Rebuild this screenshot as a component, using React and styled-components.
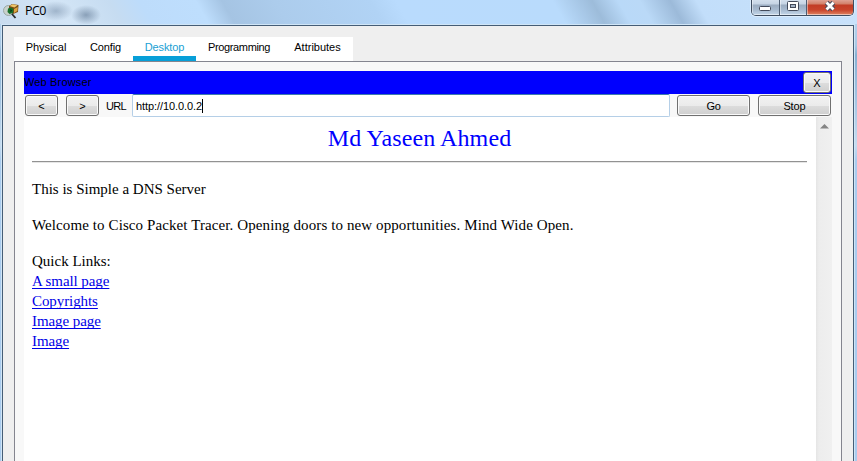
import React from "react";
import styled, { createGlobalStyle } from "styled-components";

const Global = createGlobalStyle`
  * { box-sizing: border-box; }
  body { margin: 0; overflow: hidden; }
`;

const Window = styled.div`
  width: 857px;
  height: 461px;
  display: flex;
  flex-direction: column;
  overflow: hidden;
  font: 11px/14px "Liberation Sans", Arial, sans-serif;
  color: #000;
  background: linear-gradient(180deg, #bcdaf5 0, #a9c8e4 45px, #86b0d2 55px, #a4c4e2 100px, #c6dcf0 145px, #a9cbee 160px, #a9cbee 100%);
`;

const TitleBar = styled.header`
  height: 24px;
  flex: none;
  display: flex;
  align-items: flex-start;
  padding: 0 3px 0 3px;
  background:
    radial-gradient(ellipse 17px 10px at 56px 11px, rgba(90, 115, 145, 0.42), transparent),
    radial-gradient(ellipse 15px 10px at 86px 15px, rgba(70, 95, 125, 0.5), transparent),
    linear-gradient(60deg, #c9dcef 0, #d3e5f6 8%, #c6dcf1 14%, #bddcfb 17.5%, #bedefd 24%, #a5c4e3 27%, #acccec 33%, #b1d3f5 44%, #b9dbfd 47%, #b9dbfc 65%, #9dbcda 69.5%, #b9d9f8 72.5%, #bad9f7 75%, #9cbad9 78.5%, #c2defa 81.5%, #c9e2fb 100%);
`;

const TitleIcon = styled.svg`
  width: 17px;
  height: 19px;
  margin-top: 2px;
`;

const Title = styled.span`
  margin: 3px 0 0 5px;
  font: 12.5px/16px "Open Sans", "Noto Sans", sans-serif;
  letter-spacing: -0.6px;
  flex: 1;
`;

const Captions = styled.div`
  display: flex;
  height: 16px;
  width: 103px;
  border: 1px solid #3f4d60;
  border-top: 0;
  border-radius: 0 0 5px 5px;
  overflow: hidden;
  box-shadow: 0 0 0 1px rgba(235, 245, 255, 0.6);
`;

const Caption = styled.button`
  width: ${(p) => p.$w}px;
  height: 15px;
  padding: 0;
  border: 0;
  border-right: ${(p) => (p.$close ? "0" : "1px solid #4d5d72")};
  box-shadow: inset 0 -1px 0 rgba(255, 255, 255, 0.5), inset 1px 0 0 rgba(255, 255, 255, 0.45);
  background: ${(p) =>
    p.$close
      ? "linear-gradient(#dfa294 0, #d28069 4px, #c23c26 5px, #c9452c 10px, #df8563 15px)"
      : "linear-gradient(#d3dfec 0, #c6d4e4 4px, #9bacc0 5px, #a8bbd0 10px, #c3d6e9 15px)"};
  svg { display: block; margin: 0 auto; }
`;

const Body = styled.main`
  flex: 1;
  min-height: 0;
  display: flex;
  flex-direction: column;
  margin: 1px 3px 0 2px;
  padding: 11px 11px 0;
  background: #efefef;
  border: 1px solid #455d76;
  border-bottom: 0;
  outline: 1px solid #d0e5f6;
`;

const Tabs = styled.nav`
  height: 24px;
  width: 339px;
  flex: none;
  display: flex;
  background: #fff;
`;

const Tab = styled.button`
  width: ${(p) => p.$w}px;
  height: 24px;
  padding: 1px 0 0;
  border: 0;
  border-bottom: 5px solid ${(p) => (p.$active ? "#079fd8" : "#fff")};
  background: #fff;
  color: ${(p) => (p.$active ? "#1a9fd4" : "#000")};
  font: inherit;
  letter-spacing: ${(p) => p.$ls || 0}px;
  text-align: center;
  white-space: nowrap;
`;

const Pane = styled.section`
  width: 828px;
  flex: 1;
  min-height: 0;
  display: flex;
  flex-direction: column;
  padding: 9px 9px 0;
  background: #f8f8f8;
  border: 1px solid #84858f;
  border-bottom: 0;
`;

const BrowserBar = styled.div`
  height: 23px;
  flex: none;
  display: flex;
  align-items: center;
  justify-content: space-between;
  padding-right: 1px;
  background: #0000fe;
`;

const BarTitle = styled.span`
  padding-bottom: 2px;
  letter-spacing: 0.15px;
`;

const Toolbar = styled.div`
  height: 23px;
  flex: none;
  display: flex;
  align-items: center;
  padding: 0 1px;
`;

const PushButton = styled.button`
  width: ${(p) => p.$w}px;
  height: 21px;
  flex: none;
  margin-left: ${(p) => p.$gap || 0}px;
  padding: 1px 0 0;
  border: 1px solid #707070;
  border-radius: 3px;
  box-shadow: inset 0 0 0 1px #fafafa;
  background: linear-gradient(#f2f2f2 0, #ebebeb 50%, #dddddd 51%, #cfcfcf 100%);
  color: #000;
  font: inherit;
  letter-spacing: ${(p) => p.$ls || 0}px;
`;

const UrlLabel = styled.label`
  width: 26px;
  margin-left: 7px;
  padding-top: 1px;
  letter-spacing: -0.7px;
`;

const UrlField = styled.div`
  width: 538px;
  height: 23px;
  display: flex;
  align-items: center;
  padding: 1px 3px 0;
  background: #fff;
  border: 1px solid #b5cfe7;
  border-top-color: #3d7bad;
  border-radius: 2px;
  letter-spacing: -0.08px;
`;

const Caret = styled.i`
  width: 1px;
  height: 14px;
  background: #000;
`;

const Viewport = styled.div`
  flex: 1;
  min-height: 0;
  display: flex;
`;

const Page = styled.article`
  flex: 1;
  padding: 5px 9px 0 8px;
  background: #fff;
  font: 15px/20px "Liberation Serif", "Times New Roman", serif;
`;

const Paragraph = styled.p`
  margin: 0 0 16px;
  letter-spacing: ${(p) => p.$ls || 0}px;
`;

const Heading = styled.h1`
  margin: 0;
  font-size: 24px;
  line-height: 32px;
  font-weight: 400;
  letter-spacing: 0.1px;
  text-align: center;
  color: #0000fe;
`;

const Rule = styled.hr`
  height: 2px;
  margin: 7px 0 16px;
  border: 0;
  border-top: 1px solid #929292;
  border-bottom: 1px solid #e6e6e6;
`;

const PageLink = styled.a`
  display: block;
  width: max-content;
  color: #0000e6;
  letter-spacing: -0.08px;
  text-decoration: underline;
  text-underline-offset: 2px;
  text-decoration-thickness: 1px;
  text-decoration-skip-ink: none;
`;

const ScrollTrack = styled.div`
  width: 16px;
  padding: 7px 0 0 4px;
  background: linear-gradient(90deg, #e5e5e5, #ededed 3px, #f0f0f0);
  svg { display: block; }
`;

export default function App() {
  return (
    <Window>
      <Global />
      <TitleBar>
        <TitleIcon viewBox="0 0 17 19">
          <ellipse cx="5.500" cy="8.500" rx="5" ry="5" fill="#c9d2cc" stroke="#9aa8a5" />
          <path d="M6 4 9 2 15.500 3 15 10 10 12 6 9Z" fill="#7b4f17" />
          <path d="M6.500 4 9.500 2.300 14.500 3.300 11.500 5.500Z" fill="#edc56a" />
          <path d="M11 7 14.800 5 14.300 9 11 11Z" fill="#dca443" />
          <path d="M5 6.500 8 5.500 10.500 7 10 11 6.500 12 4.500 10Z" fill="#17702a" />
          <path d="M7.500 7 9 8.500 7.500 10.500Z" fill="#092c10" />
          <path d="m9 12 3.500 4" stroke="#272b2d" strokeWidth="1.800" />
        </TitleIcon>
        <Title>PC0</Title>
        <Captions>
          <Caption $w={28} aria-label="Minimize">
            <svg width="13" height="15"><rect x="0.500" y="6.500" width="11" height="4" rx="1" fill="#fff" stroke="#434a5a" /></svg>
          </Caption>
          <Caption $w={27} aria-label="Maximize">
            <svg width="13" height="15"><rect x="0.500" y="1.500" width="11" height="9" rx="1" fill="#fff" stroke="#434a5a" /><rect x="3.500" y="4.500" width="5" height="3" fill="#a4b4c7" stroke="#434a5a" /></svg>
          </Caption>
          <Caption $w={46} $close aria-label="Close">
            <svg width="14" height="15"><path d="m3.500 2.500 7 7m0-7-7 7" stroke="#4d4b5b" strokeWidth="5" /><path d="m3.500 2.500 7 7m0-7-7 7" stroke="#fff" strokeWidth="2.800" /></svg>
          </Caption>
        </Captions>
      </TitleBar>
      <Body>
        <Tabs>
          <Tab $w={64} $ls={-0.05}>Physical</Tab>
          <Tab $w={55} $ls={-0.15}>Config</Tab>
          <Tab $w={63} $active $ls={-0.1}>Desktop</Tab>
          <Tab $w={86} $ls={-0.35}>Programming</Tab>
          <Tab $w={71}>Attributes</Tab>
        </Tabs>
        <Pane>
          <BrowserBar>
            <BarTitle>Web Browser</BarTitle>
            <PushButton $w={28}>X</PushButton>
          </BrowserBar>
          <Toolbar>
            <PushButton $w={33}>&lt;</PushButton>
            <PushButton $w={33} $gap={8}>&gt;</PushButton>
            <UrlLabel>URL</UrlLabel>
            <UrlField>http://10.0.0.2<Caret /></UrlField>
            <PushButton $w={73} $gap={7} $ls={-0.3}>Go</PushButton>
            <PushButton $w={73} $gap={8} $ls={-0.1}>Stop</PushButton>
          </Toolbar>
          <Viewport>
            <Page>
              <Heading>Md Yaseen Ahmed</Heading>
              <Rule />
              <Paragraph>This is Simple a DNS Server</Paragraph>
              <Paragraph $ls={0.1}>Welcome to Cisco Packet Tracer. Opening doors to new opportunities. Mind Wide Open.</Paragraph>
              <div>Quick Links:</div>
              <PageLink>A small page</PageLink>
              <PageLink>Copyrights</PageLink>
              <PageLink>Image page</PageLink>
              <PageLink>Image</PageLink>
            </Page>
            <ScrollTrack>
              <svg width="9" height="5"><path d="M0 4.500 4.500 0 9 4.500Z" fill="#858585" /></svg>
            </ScrollTrack>
          </Viewport>
        </Pane>
      </Body>
    </Window>
  );
}
